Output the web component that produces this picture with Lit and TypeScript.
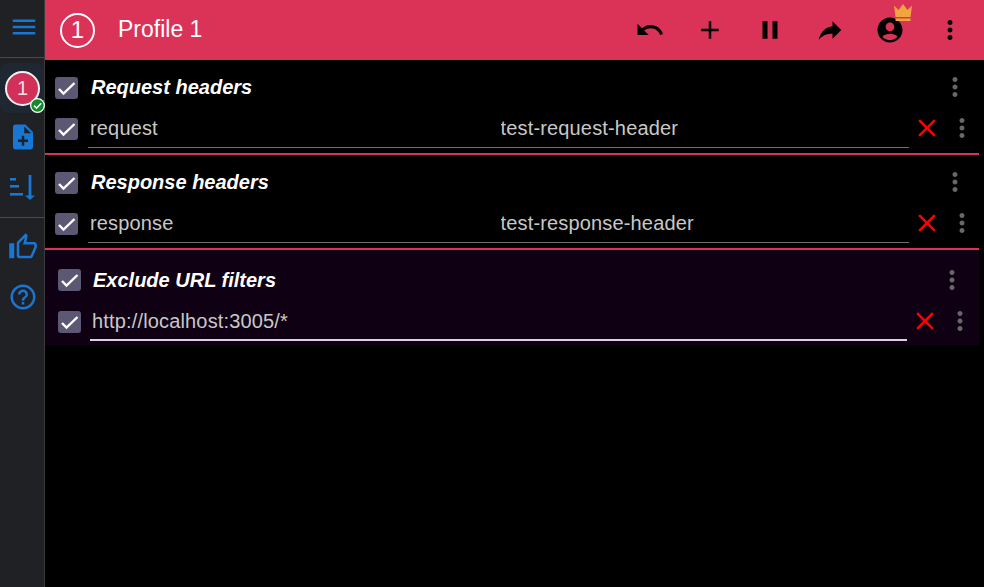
import { LitElement, html, css, svg } from 'lit';
import { customElement } from 'lit/decorators.js';

const ICONS = {
  menu: 'M3 18h18v-2H3v2zm0-5h18v-2H3v2zm0-7v2h18V6H3z',
  noteAdd: 'M14 2H6c-1.1 0-1.99.9-1.99 2L4 20c0 1.1.89 2 1.99 2H18c1.1 0 2-.9 2-2V8l-6-6zm2 14h-3v3h-2v-3H8v-2h3v-3h2v3h3v2zm-3-7V3.5L18.5 9H13z',
  thumb: 'M9 21h9c.83 0 1.54-.5 1.84-1.22l3.02-7.05c.09-.23.14-.47.14-.73v-2c0-1.1-.9-2-2-2h-6.31l.95-4.57.03-.32c0-.41-.17-.79-.44-1.06L14.17 1 7.58 7.59C7.22 7.95 7 8.45 7 9v10c0 1.1.9 2 2 2zM9 9l4.34-4.34L12 10h9v2l-3 7H9V9zM1 9h4v12H1z',
  help: 'M11 18h2v-2h-2v2zm1-16C6.48 2 2 6.48 2 12s4.48 10 10 10 10-4.48 10-10S17.52 2 12 2zm0 18c-4.41 0-8-3.59-8-8s3.59-8 8-8 8 3.59 8 8-3.59 8-8 8zm0-14c-2.21 0-4 1.79-4 4h2c0-1.1.9-2 2-2s2 .9 2 2c0 2-3 1.75-3 5h2c0-2.25 3-2.5 3-5 0-2.21-1.79-4-4-4z',
  undo: 'M12.5 8c-2.65 0-5.05.99-6.9 2.6L2 7v9h9l-3.62-3.62c1.39-1.16 3.16-1.88 5.12-1.88 3.54 0 6.55 2.31 7.6 5.5l2.37-.78C21.08 11.03 17.15 8 12.5 8z',
  add: 'M19 13h-6v6h-2v-6H5v-2h6V5h2v6h6v2z',
  pause: 'M6 19h4V5H6v14zm8-14v14h4V5h-4z',
  forward: 'M14 9V5l7 7-7 7v-4.1c-5 0-8.5 1.6-11 5.1 1-5 4-10 11-11z',
  account: 'M12 2C6.48 2 2 6.48 2 12s4.48 10 10 10 10-4.48 10-10S17.52 2 12 2zm0 4c1.93 0 3.5 1.57 3.5 3.5S13.93 13 12 13s-3.5-1.57-3.5-3.5S10.07 6 12 6zm0 14c-2.03 0-4.43-.82-6.14-2.88C7.55 15.8 9.68 15 12 15s4.45.8 6.14 2.12C16.43 19.18 14.03 20 12 20z',
  more: 'M12 8c1.1 0 2-.9 2-2s-.9-2-2-2-2 .9-2 2 .9 2 2 2zm0 2c-1.1 0-2 .9-2 2s.9 2 2 2 2-.9 2-2-.9-2-2-2zm0 6c-1.1 0-2 .9-2 2s.9 2 2 2 2-.9 2-2-.9-2-2-2z',
  clear: 'M19 6.41 17.59 5 12 10.59 6.41 5 5 6.41 10.59 12 5 17.59 6.41 19 12 13.41 17.59 19 19 17.59 13.41 12z',
};

const icon = (name: keyof typeof ICONS, cls = '') =>
  html`<svg class="icon ${cls}" viewBox="0 0 24 24">${svg`<path d=${ICONS[name]}></path>`}</svg>`;

const check = html`<span class="check">
  <svg viewBox="0 0 23 22"><path d="M4 12l4.500 4.500L19.500 6" fill="none" stroke="#fff" stroke-width="2.400"></path></svg>
</span>`;

type Group = { title: string; rows: string[][]; filter?: boolean };

const GROUPS: Group[] = [
  { title: 'Request headers', rows: [['request', 'test-request-header']] },
  { title: 'Response headers', rows: [['response', 'test-response-header']] },
  { title: 'Exclude URL filters', rows: [['http://localhost:3005/*']], filter: true },
];

@customElement('app-root')
export class AppRoot extends LitElement {
  static styles = css`
    :host {
      display: flex;
      width: 984px;
      height: 587px;
      overflow: hidden;
      background: #000;
      font-family: 'Liberation Sans', Arial, sans-serif;
    }
    .icon {
      display: block;
      width: 30px;
      height: 30px;
      fill: currentColor;
      flex: none;
    }

    .sidebar {
      width: 44px;
      flex: none;
      display: flex;
      flex-direction: column;
      align-items: center;
      background: #202124;
      border-right: 1px solid #3c3c3e;
      color: #1976d2;
    }
    .side-top {
      height: 58px;
      width: 100%;
      display: flex;
      align-items: center;
      justify-content: center;
      padding: 0 0 3px 3px;
      box-sizing: border-box;
      border-bottom: 1px solid #4a4a4c;
    }
    .side-profile {
      position: relative;
      width: 44px;
      height: 50px;
      margin-top: 5px;
      padding-left: 1px;
      box-sizing: border-box;
      border-radius: 8px;
      background: #1f2733;
      display: flex;
      align-items: center;
      justify-content: center;
    }
    .avatar {
      width: 35px;
      height: 35px;
      box-sizing: border-box;
      border: 2px solid #f2f2f2;
      border-radius: 50%;
      background: #d13059;
      color: #f0dfe4;
      font-size: 20px;
      display: flex;
      align-items: center;
      justify-content: center;
    }
    .badge {
      position: absolute;
      left: 30px;
      top: 35px;
      width: 15px;
      height: 15px;
    }
    .side-icon {
      height: 30px;
      margin: 9px 0 0 2px;
    }
    .sort {
      margin-top: 22px;
      width: 44px;
      height: 30px;
      display: block;
    }
    .side-sep {
      width: 100%;
      border-top: 1px solid #4a4a4c;
      margin-top: 13px;
    }
    .thumb {
      margin: 14px 0 0 2px;
    }
    .help {
      margin: 20px 0 0 2px;
    }

    .main {
      flex: 1;
      min-width: 0;
      display: flex;
      flex-direction: column;
    }
    .header {
      height: 60px;
      flex: none;
      display: flex;
      align-items: center;
      background: #db3258;
      padding: 0 4px 0 15px;
      color: #000;
    }
    .num {
      width: 35px;
      height: 35px;
      box-sizing: border-box;
      border: 2px solid #fff;
      border-radius: 50%;
      color: #fff;
      font-size: 24px;
      display: flex;
      align-items: center;
      justify-content: center;
    }
    .name {
      color: #fff;
      font-size: 23px;
      margin-left: 23px;
      padding-bottom: 2px;
      flex: 1;
    }
    .action {
      position: relative;
      width: 60px;
      height: 60px;
      display: flex;
      align-items: center;
      justify-content: center;
    }
    .crown {
      position: absolute;
      left: 33px;
      top: 4px;
      width: 20px;
      height: 18px;
    }

    .group {
      margin-right: 5px;
      padding-top: 6px;
      padding-bottom: 5px;
      border-bottom: 2px solid #db3258;
    }
    .group.filter {
      padding: 9px 0 4px;
      border-bottom: none;
      background: #0f0014;
    }
    .title-row,
    .row {
      display: flex;
      align-items: center;
      padding-left: 10px;
    }
    .filter .title-row,
    .filter .row {
      padding-left: 13px;
    }
    .filter .row {
      padding-right: 2px;
    }
    .title-row {
      height: 42px;
    }
    .row {
      height: 40px;
    }
    .check {
      width: 23px;
      height: 22px;
      margin-top: 2px;
      flex: none;
      border-radius: 3px;
      background: #5c5874;
    }
    .filter .title-row .check {
      margin-top: 0;
    }
    .check svg {
      display: block;
    }
    .title {
      flex: 1;
      margin-left: 13px;
      color: #fff;
      font-size: 20px;
      font-weight: 700;
      font-style: italic;
    }
    .filter .title {
      margin-left: 12px;
    }
    .title-row .dots {
      margin-right: 9px;
    }
    .filter .title-row .dots {
      margin-right: 12px;
    }
    .dots {
      color: #686868;
    }
    .fields {
      flex: 1;
      min-width: 0;
      display: flex;
      align-self: stretch;
      margin-left: 10px;
    }
    .filter .fields {
      margin-left: 9px;
    }
    .field {
      flex: 1;
      min-width: 0;
      box-sizing: border-box;
      height: 40px;
      padding: 2px 2px 0;
      border: none;
      border-bottom: 1px solid #6e6e6e;
      background: transparent;
      color: #c8c8c8;
      font: 20px 'Liberation Sans', Arial, sans-serif;
      letter-spacing: 0.16px;
      outline: none;
    }
    .filter .field {
      border-bottom: 2px solid #d8d0e4;
      padding-top: 3px;
    }
    .del {
      color: #f00;
      margin-left: 3px;
    }
    .row .dots {
      margin-left: 5px;
      margin-right: 2px;
    }
  `;

  private renderGroup(g: Group) {
    return html`<section class="group ${g.filter ? 'filter' : ''}">
      <div class="title-row">
        ${check}
        <span class="title">${g.title}</span>
        ${icon('more', 'dots')}
      </div>
      ${g.rows.map(
        (r) => html`<div class="row">
          ${check}
          <div class="fields">
            ${r.map((v) => html`<input class="field" .value=${v} />`)}
          </div>
          ${icon('clear', 'del')}
          ${icon('more', 'dots')}
        </div>`
      )}
    </section>`;
  }

  render() {
    return html`
      <nav class="sidebar">
        <div class="side-top">${icon('menu')}</div>
        <div class="side-profile">
          <div class="avatar">1</div>
          <svg class="badge" viewBox="0 0 15 15">
            <circle cx="7.500" cy="7.500" r="7.500" fill="#fff"></circle>
            <circle cx="7.500" cy="7.500" r="6.200" fill="#128a2c"></circle>
            <path d="M4 7.600l2.600 2.600 4.600-5" fill="none" stroke="#fff" stroke-width="1.600"></path>
          </svg>
        </div>
        <div class="side-icon">${icon('noteAdd')}</div>
        <svg class="sort" viewBox="0 0 44 30" fill="currentColor">
          <rect x="10" y="4" width="6" height="2.600"></rect>
          <rect x="10" y="11" width="9" height="2.600"></rect>
          <rect x="10" y="19" width="13" height="2.600"></rect>
          <rect x="28.600" y="1" width="2.800" height="21"></rect>
          <path d="M25 21.500h10L30 26z"></path>
        </svg>
        <div class="side-sep"></div>
        ${icon('thumb', 'thumb')}
        ${icon('help', 'help')}
      </nav>
      <div class="main">
        <header class="header">
          <div class="num">1</div>
          <div class="name">Profile 1</div>
          <div class="action">${icon('undo')}</div>
          <div class="action">${icon('add')}</div>
          <div class="action">${icon('pause')}</div>
          <div class="action">${icon('forward')}</div>
          <div class="action">
            ${icon('account')}
            <svg class="crown" viewBox="0 0 20 18">
              <path d="M1 1.500l4.500 4.500L10 0l4.500 6L19 1.500 17.500 13h-15z" fill="#f0a63c"></path>
              <rect x="2.500" y="14.500" width="15" height="2.500" fill="#f0a63c"></rect>
            </svg>
          </div>
          <div class="action">${icon('more')}</div>
        </header>
        ${GROUPS.map((g) => this.renderGroup(g))}
      </div>
    `;
  }
}
